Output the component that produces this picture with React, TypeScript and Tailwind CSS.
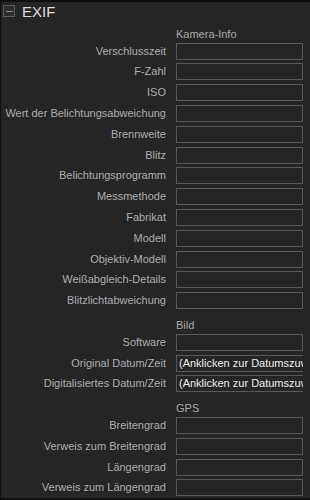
import React from 'react'

type Row = { kind: 'head' | 'field'; label: string; value?: string }

const rows: Row[] = [
  { kind: 'head', label: 'Kamera-Info' },
  { kind: 'field', label: 'Verschlusszeit' },
  { kind: 'field', label: 'F-Zahl' },
  { kind: 'field', label: 'ISO' },
  { kind: 'field', label: 'Wert der Belichtungsabweichung' },
  { kind: 'field', label: 'Brennweite' },
  { kind: 'field', label: 'Blitz' },
  { kind: 'field', label: 'Belichtungsprogramm' },
  { kind: 'field', label: 'Messmethode' },
  { kind: 'field', label: 'Fabrikat' },
  { kind: 'field', label: 'Modell' },
  { kind: 'field', label: 'Objektiv-Modell' },
  { kind: 'field', label: 'Weißabgleich-Details' },
  { kind: 'field', label: 'Blitzlichtabweichung' },
  { kind: 'head', label: 'Bild' },
  { kind: 'field', label: 'Software' },
  { kind: 'field', label: 'Original Datum/Zeit', value: '(Anklicken zur Datumszuweisung)' },
  { kind: 'field', label: 'Digitalisiertes Datum/Zeit', value: '(Anklicken zur Datumszuweisung)' },
  { kind: 'head', label: 'GPS' },
  { kind: 'field', label: 'Breitengrad' },
  { kind: 'field', label: 'Verweis zum Breitengrad' },
  { kind: 'field', label: 'Längengrad' },
  { kind: 'field', label: 'Verweis zum Längengrad' },
]

export default function App() {
  return (
    <div
      className="w-[310px] h-[500px] bg-[#252525] border-t-2 border-l border-b-2 border-[#0e0e0e] overflow-hidden"
      style={{ fontFamily: '"Liberation Sans", Arial, sans-serif' }}
    >
      {/* Header */}
      <div className="h-[18px] flex items-center gap-[7px] pl-[2px]">
        <div className="w-[12px] h-[12px] border border-[#5a5a5a] bg-[#2c2c2c] flex items-center justify-center">
          <div className="w-[7px] h-px bg-[#8a8a8a]" />
        </div>
        <span className="text-[15px] leading-none text-[#dcdcdc]">EXIF</span>
      </div>

      {/* Rows */}
      <div className="flex flex-col">
        {rows.map((row, i) =>
          row.kind === 'head' ? (
            <div key={i} className="h-[20.8px] flex items-end pb-[1px] pl-[175px]">
              <span className="text-[11px] leading-none text-[#a8a8a8]">{row.label}</span>
            </div>
          ) : (
            <div key={i} className="h-[20.8px] flex items-center">
              <span className="w-[165px] text-right text-[11px] leading-none text-[#adadad] whitespace-nowrap">
                {row.label}
              </span>
              <div
                className={`ml-[10px] w-[127px] h-[17px] border border-[#585858] flex items-center overflow-hidden ${
                  row.value ? 'border-r-0' : ''
                }`}
              >
                {row.value && (
                  <span className="pl-[2px] text-[11px] leading-none text-[#ececec] whitespace-nowrap">
                    {row.value}
                  </span>
                )}
              </div>
            </div>
          )
        )}
      </div>
    </div>
  )
}
